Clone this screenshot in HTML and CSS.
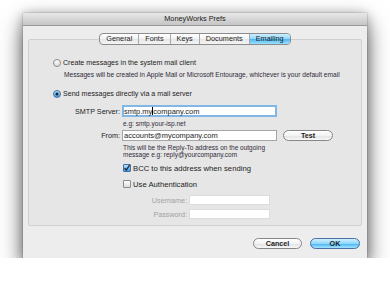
FILE: index.html
```html
<!DOCTYPE html>
<html lang="en">
<head>
  <meta charset="UTF-8">
  <title>MoneyWorks Prefs</title>
  <link rel="stylesheet" href="styles.css">
</head>
<body>

  <div class="stage">
    <div class="window">
      <div class="titlebar">MoneyWorks Prefs</div>

      <!-- tab switcher, sits over the top edge of the group box -->
      <div class="tabs">
        <span class="tab">General</span>
        <span class="tab">Fonts</span>
        <span class="tab">Keys</span>
        <span class="tab">Documents</span>
        <span class="tab active">Emailing</span>
      </div>

      <div class="group">
        <div class="option first"><span class="radio"></span>Create messages in the system mail client</div>
        <p class="note">Messages will be created in Apple Mail or Microsoft Entourage, whichever is your default email</p>

        <div class="option second"><span class="radio on"></span>Send messages directly via a mail server</div>

        <div class="field-row smtp">
          <label>SMTP Server:</label>
          <span class="input focused">smtp.my<span class="caret"></span>company.com</span>
        </div>
        <p class="hint">e.g: smtp.your-isp.net</p>

        <div class="field-row from">
          <label>From:</label>
          <span class="input">accounts@mycompany.com</span>
          <button class="btn test">Test</button>
        </div>
        <p class="hint multi">This will be the Reply-To address on the outgoing<br>message e.g: reply@yourcompany.com</p>

        <div class="check-row bcc"><span class="checkbox on"><svg viewBox="0 0 8 8" width="8" height="8"><path d="M1.6 4.2 L3.3 6 L6.6 1.2" fill="none" stroke="#1b2433" stroke-width="1.3"/></svg></span>BCC to this address when sending</div>
        <div class="check-row auth"><span class="checkbox"></span>Use Authentication</div>

        <div class="field-row login user">
          <label>Username:</label>
          <span class="input off"></span>
        </div>
        <div class="field-row login pass">
          <label>Password:</label>
          <span class="input off"></span>
        </div>
      </div>

      <div class="actions">
        <button class="btn cancel">Cancel</button>
        <button class="btn default">OK</button>
      </div>
    </div>
  </div>

</body>
</html>
```

FILE: styles.css
```css
body {
  margin: 0;
  background-color: #fff;
  color: #1c1c1c;
  font-family: "Liberation Sans", Arial, sans-serif;
}
.stage {
  padding: 13px 0 0 23px;
}
.window {
  width: 344px;
  height: 245px;
  box-sizing: border-box;
  display: flex;
  flex-direction: column;
  background-color: #ededed;
  box-shadow: 0 12px 22px rgba(0, 0, 0, 0.55), 0 2px 12px rgba(0, 0, 0, 0.35), 0 0 1px rgba(0, 0, 0, 0.5);
}
.titlebar {
  height: 13px;
  box-sizing: border-box;
  line-height: 12px;
  text-align: center;
  font-size: 7.3px;
  color: #222;
  background: linear-gradient(#e8e8e8, #c5c5c5);
  border-bottom: 1px solid #9a9a9a;
}

/* tabs */
.tabs {
  align-self: center;
  display: flex;
  height: 12px;
  box-sizing: border-box;
  margin: 7px 0 -6px;
  border: 1px solid #8c8c8c;
  border-radius: 4px;
  background: linear-gradient(#fff, #f2f2f2 50%, #e6e6e6 51%, #f4f4f4);
  overflow: hidden;
  position: relative;
  z-index: 1;
}
.tab {
  padding: 0 6px;
  font-size: 7.3px;
  line-height: 10px;
  border-left: 1px solid #a8a8a8;
}
.tab:first-child {
  border-left: 0;
}
.tab.active {
  background: linear-gradient(#cdeeff, #8fd6fb 50%, #4db4f0 51%, #9ae2ff);
}

/* group box */
.group {
  height: 187px;
  box-sizing: border-box;
  margin: 0 5px;
  border: 1px solid #d0d0d0;
  border-radius: 2px;
  background-color: #e6e6e6;
}
.option {
  display: flex;
  align-items: center;
  gap: 2px;
  height: 10px;
  margin-left: 24px;
  font-size: 7.1px;
}
.option.first {
  margin-top: 18px;
}
.option.second {
  margin-top: 10px;
}
.radio, .checkbox {
  width: 8px;
  height: 8px;
  box-sizing: border-box;
  border: 1px solid #8a8a8a;
  background: linear-gradient(#fdfdfd, #dedede);
}
.radio {
  border-radius: 50%;
}
.radio.on {
  border-color: #3f6fa3;
  background: radial-gradient(circle, #18263a 0 1.2px, transparent 1.8px), linear-gradient(#b4e2ff, #3e9fe4);
}
.checkbox {
  border-radius: 1px;
}
.checkbox.on {
  border-color: #3f6fa3;
  background: linear-gradient(#b4e2ff, #3e9fe4);
}
.checkbox svg {
  display: block;
  margin: -1px;
}
.note, .hint {
  margin: 3px 0 0 35px;
  font-size: 6.6px;
  line-height: 8px;
  height: 8px;
  color: #2f2b38;
  white-space: nowrap;
}
.hint {
  margin-left: 94px;
  font-size: 6.5px;
}
.hint.multi {
  height: auto;
  line-height: 7px;
}

/* fields */
.field-row {
  display: flex;
  align-items: center;
  height: 12px;
}
.field-row label {
  width: 91px;
  margin-right: 2px;
  text-align: right;
  font-size: 7.2px;
}
.field-row.smtp {
  margin-top: 6px;
}
.field-row.from {
  margin-top: 1px;
}
.input {
  width: 155px;
  height: 11px;
  box-sizing: border-box;
  padding-left: 1px;
  background-color: #fff;
  border: 1px solid #a6a6a6;
  font-size: 7.5px;
  line-height: 9px;
  white-space: nowrap;
}
.input.focused {
  height: 12px;
  border: 2px solid #80b7e6;
  line-height: 8px;
  padding-left: 0;
}
.caret {
  display: inline-block;
  width: 0;
  height: 8px;
  border-left: 1px solid #000;
  vertical-align: -1px;
}
.check-row {
  display: flex;
  align-items: center;
  gap: 2px;
  height: 10px;
  margin: 5px 0 0 94px;
  font-size: 7.7px;
}
.check-row.auth {
  margin-top: 6px;
}
.field-row.login {
  height: 10px;
}
.field-row.login label {
  width: 158px;
  color: #a2a2a2;
}
.field-row.user {
  margin-top: 6px;
}
.field-row.pass {
  margin-top: 4px;
}
.input.off {
  width: 81px;
  height: 10px;
  border-color: #dcdcdc;
}

/* buttons */
.btn {
  height: 11px;
  padding: 0;
  border: 1px solid #878787;
  border-radius: 6px;
  background: linear-gradient(#fff, #f3f3f3 50%, #e2e2e2 51%, #f7f7f7);
  font-family: "Liberation Sans", Arial, sans-serif;
  font-size: 7.2px;
  font-weight: bold;
  line-height: 9px;
  color: #222;
}
.test {
  width: 50px;
  margin-left: 6px;
}
.actions {
  display: flex;
  justify-content: flex-end;
  gap: 8px;
  margin: 12px 7px 0 0;
}
.cancel {
  width: 49px;
}
.default {
  width: 50px;
  border-color: #4a6fa4;
  background: linear-gradient(#d2f0ff, #8fd7fb 50%, #45b0f0 51%, #a5e6ff);
}
```
